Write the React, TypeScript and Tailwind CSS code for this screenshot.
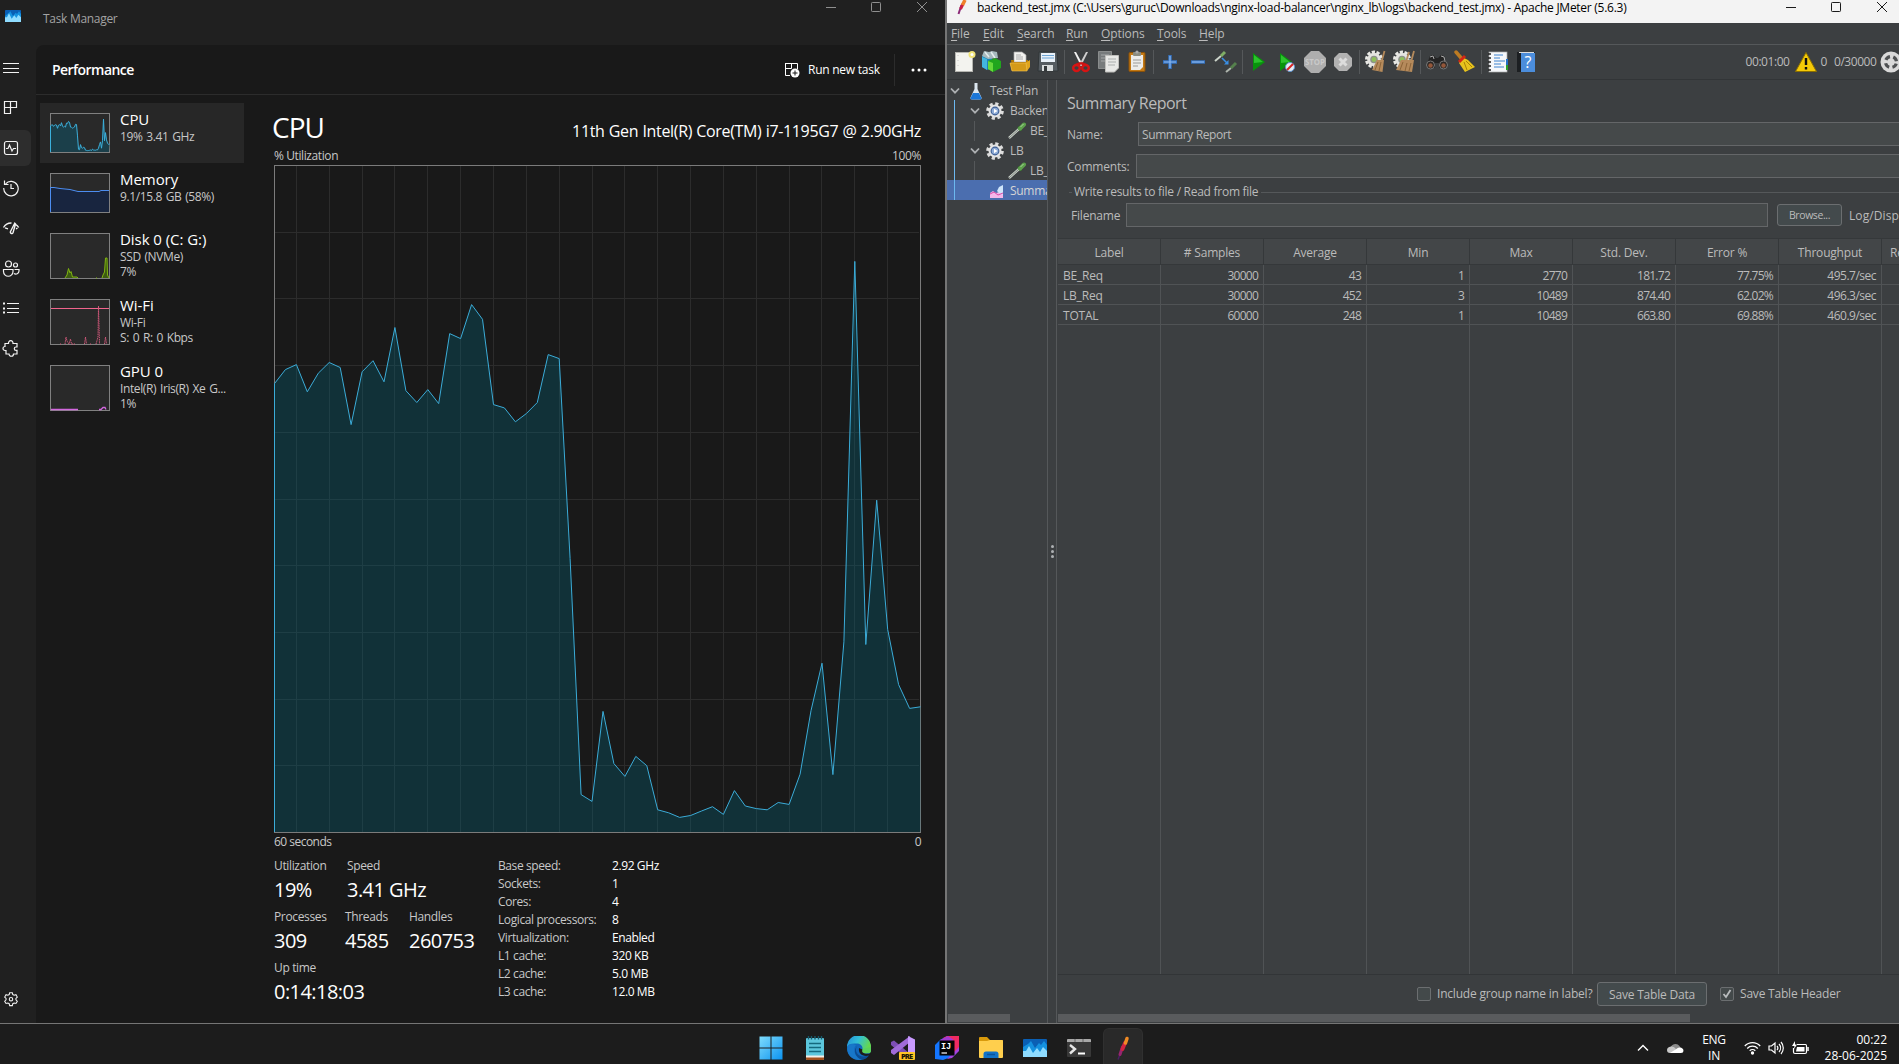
import React from "react";

const CPU = [
  383.6, 369.6, 364.6, 391.8, 373.2, 362.5, 367.5, 424.6, 371.8, 360.7, 381.8, 327.5, 390.7, 402.5, 389.6, 403.6, 333.6,
  338.6, 304.6, 319.3, 404.6, 407.9, 421.8, 413.6, 402.5, 354.6, 358.6, 558.6, 794.6, 801.4, 711.4, 763.6, 776.4, 756.4,
  765.7, 809.8, 812.8, 817.4, 815.5, 811, 806.7, 814.4, 790.6, 806, 808.6, 809.8, 802.5, 804.4, 774.2, 710.7, 663.2,
  774.6, 641.8, 261.4, 644.5, 500.2, 629.5, 684.6, 708.4, 706.8,
].map((y) => y - 165.5);

const STEP = 646 / 59;

function line(points: number[], step: number, scale: number) {
  return points.map((y, i) => `${(i * step + 0.5).toFixed(1)},${(y * scale + 0.5).toFixed(1)}`).join(" ");
}

function CpuChart() {
  const pts = line(CPU, STEP, 1);
  return (
    <svg width="647" height="668" className="block">
      {Array.from({ length: 19 }, (_, i) => {
        const x = Math.round((i * 3 + 2) * STEP) + 0.5;
        return <path key={i} d={`M${x} 0V668`} stroke="#2c2c2c" />;
      })}
      {Array.from({ length: 9 }, (_, i) => {
        const y = Math.round((i + 1) * 66.7) + 0.5;
        return <path key={i} d={`M0 ${y}H645`} stroke="#2c2c2c" />;
      })}
      <rect x="0.5" y="0.5" width="646" height="667" fill="none" stroke="#7b7b7b" />
      <polygon points={`0.5,667 ${pts} 646.5,667`} fill="#006b82" fillOpacity="0.3" />
      <polyline points={`0.5,667 ${pts}`} fill="none" stroke="#3bacd8" />
    </svg>
  );
}

function Thumb({ h, children }: { h: number; children: React.ReactNode }) {
  return (
    <svg width="60" height={h} className="block shrink-0">
      <rect x="0.5" y="0.5" width="59" height={h - 1} fill="#292929" stroke="#808080" />
      {children}
    </svg>
  );
}

const cpuMini = line(CPU, 1, 38 / 667);

const resources = [
  {
    name: "CPU",
    sub: ["19% 3.41 GHz"],
    on: true,
    art: (
      <Thumb h={40}>
        <polygon points={`1,39 ${cpuMini} 59,39`} fill="#1b3f4a" />
        <polyline points={`0.5,39 ${cpuMini}`} fill="none" stroke="#3bb0dc" />
      </Thumb>
    ),
  },
  {
    name: "Memory",
    sub: ["9.1/15.8 GB (58%)"],
    art: (
      <Thumb h={40}>
        <polygon points="1,39 1,14.5 20,16.5 28,18.5 49,18.5 51,17.5 59,17.5 59,39" fill="#18253f" />
        <path d="M0.5 39V14.5H4L10 15.5L20 16.5L28 18.5H49L51 17.5H59" fill="none" stroke="#4c8df0" />
      </Thumb>
    ),
  },
  {
    name: "Disk 0 (C: G:)",
    sub: ["SSD (NVMe)", "7%"],
    art: (
      <Thumb h={46}>
        <path
          d="M15 45L17 42L18.5 35.5L20 40L21 38.5L22.5 44L27 44L28 45M46 45H47M52 45L53 42L54.500 39L55.500 25L57 25L57.500 42L59 45"
          fill="#3d5a12"
          stroke="#7fb50f"
        />
      </Thumb>
    ),
  },
  {
    name: "Wi-Fi",
    sub: ["Wi-Fi", "S: 0 R: 0 Kbps"],
    art: (
      <Thumb h={46}>
        <path d="M1 9.500H59" stroke="#f0648c" />
        <path
          d="M10 45H11M15 45L16 38L17 42L19 45L20.500 40L21.500 45H25M34.500 45L35.500 38L36.500 45M40 45H41M46 45L48 38L48.500 7L49.500 45M54.500 45L55.500 38L56.500 45"
          fill="none"
          stroke="#d0587a"
          strokeDasharray="1.500 0.8"
        />
      </Thumb>
    ),
  },
  {
    name: "GPU 0",
    sub: ["Intel(R) Iris(R) Xe G...", "1%"],
    art: (
      <Thumb h={46}>
        <path d="M1 44.500H28M49 44.500H51L53 42.500H55L56 44.500" fill="none" stroke="#d268de" strokeWidth="1.300" />
      </Thumb>
    ),
  },
];

function NavIcon({ children, active }: { children: React.ReactNode; active?: boolean }) {
  return (
    <div className="flex h-10 items-center">
      <div className={active ? "flex h-9 w-[31px] items-center rounded-r-md bg-[#2d2d2d]" : "flex h-9 w-[31px] items-center"}>
        <svg width="18" height="18" viewBox="0 0 18 18" fill="none" stroke="#f2f2f2" strokeWidth="1.2" className="ml-[2px]">
          {children}
        </svg>
      </div>
    </div>
  );
}

const gearPath =
  "M7.500 1.500h3l.5 2 1.500.8 2-.6 1.500 2.600-1.500 1.500v1.600l1.500 1.500-1.500 2.500-2-.5-1.500.8-.5 2.100h-3l-.5-2.100-1.500-.8-2 .5L2 10.900l1.500-1.500V7.800L2 6.300l1.500-2.600 2 .6L7 3.500z";

function TaskManagerMark({ s }: { s: number }) {
  return (
    <svg width={s} height={s * 0.75} viewBox="0 0 24 18">
      <rect width="24" height="18" rx="1" fill="#0a5fb4" />
      <path d="M0 9L5 5L8 2L12 9L16 4L18 6L21 2L24 6V18H0z" fill="#1491df" />
      <path d="M0 11L3 11L6 5L10 13L14 8L17 12L20 7L24 11V18H0z" fill="#8fdcff" />
    </svg>
  );
}

function WinButtons({ color }: { color: string }) {
  return (
    <svg width="104" height="12" fill="none" stroke={color} className="block shrink-0">
      <path d="M1 6.500H11" />
      <rect x="46.500" y="1.500" width="9" height="9" rx="0.8" />
      <path d="M92 1L102 11M102 1L92 11" />
    </svg>
  );
}

function Stat({ label, value, w }: { label: string; value: string; w: string }) {
  return (
    <div className={w}>
      <div className="h-[18px] text-xs leading-[18px] tracking-[-0.35px] text-[#c8c8c8]">{label}</div>
      <div className="h-[33px] pt-px text-[20px] leading-7 tracking-[-0.55px] text-white">{value}</div>
    </div>
  );
}

const specs = [
  ["Base speed:", "2.92 GHz"],
  ["Sockets:", "1"],
  ["Cores:", "4"],
  ["Logical processors:", "8"],
  ["Virtualization:", "Enabled"],
  ["L1 cache:", "320 KB"],
  ["L2 cache:", "5.0 MB"],
  ["L3 cache:", "12.0 MB"],
];

function TaskManager() {
  return (
    <section className="flex w-[945px] shrink-0 flex-col bg-[#202020]">
      <header className="flex h-[45px] items-start">
        <div className="w-[43px] pl-[5px] pt-[10px]">
          <TaskManagerMark s={16} />
        </div>
        <div className="pt-[10px] text-xs leading-[18px] tracking-[-0.3px] text-[#a3a3a3]">Task Manager</div>
        <div className="ml-auto mr-[16px] pt-[1px]">
          <WinButtons color="#8f8f8f" />
        </div>
      </header>
      <div className="flex flex-1">
        <nav className="flex w-9 flex-col pb-1 pt-[3px]">
          <NavIcon>
            <path d="M1 4.500H17M1 9.500H17M1 13.500H17" />
          </NavIcon>
          <NavIcon>
            <path d="M2.500 2.500H14.500V8.500H2.500zM8.500 2.500V14.500H2.500V8.500" />
          </NavIcon>
          <NavIcon active>
            <rect x="2.500" y="2.500" width="13" height="13" rx="2" />
            <path d="M4 9.500H6L7.500 6L10 12L11.500 9.500H14" />
          </NavIcon>
          <NavIcon>
            <path d="M3.600 4.800A7.200 7.200 0 1 1 1.800 9M2.500 1.500V5.500H6.500M9 5V9.500H12" />
          </NavIcon>
          <NavIcon>
            <path
              d="M1.500 8.500A9 9 0 0 1 9.500 4M3 8.800L6 9.800M13.500 5.300A9 9 0 0 1 16.700 8.500M15.500 9L14 9.800M12.700 4.200L8.500 12.500a1.400 1.400 0 0 0 2.500 1.300L13.500 5z"
              strokeWidth="1.400"
            />
          </NavIcon>
          <NavIcon>
            <circle cx="6.500" cy="5" r="3" />
            <circle cx="13.500" cy="6" r="2" />
            <path d="M1.500 10.500h9.500v2a4 4 0 0 1-9.500 0zM12.500 10.500h4.500v1.500a3.200 3.200 0 0 1-5 2.500" />
          </NavIcon>
          <NavIcon>
            <path d="M5 4.500H17M5 9.500H17M5 13.500H17" />
            <path d="M1 4.500H3M1 9.500H3M1 13.500H3" strokeWidth="1.800" />
          </NavIcon>
          <NavIcon>
            <path d="M3 4.500h3.500a2.300 2.300 0 1 1 4.500 0H15v3.500h-1a1.700 1.700 0 0 0 0 3.400h1V15h-3.500a2.200 2.200 0 0 1-4.500 0H4v-3.500H3a2 2 0 0 1 0-4z" />
          </NavIcon>
          <div className="mt-auto">
            <NavIcon>
              <g transform="translate(0.9 1.400) scale(0.9)">
                <path d={gearPath} />
                <circle cx="9" cy="8.600" r="1.900" />
              </g>
            </NavIcon>
          </div>
        </nav>
        <main className="flex flex-1 flex-col rounded-tl-lg bg-[#191919]">
          <div className="flex h-[50px] items-center border-b border-[#2c2c2c] pl-4">
            <h1 className="pt-px text-sm font-semibold tracking-[-0.55px] text-white">Performance</h1>
            <div className="ml-auto flex items-center">
              <svg width="16" height="16" viewBox="0 0 16 16" fill="none" stroke="#fff">
                <path d="M1 1.500H13.500V7M1.500 1V13.500H6M7.500 1V6.500H1" />
                <circle cx="11" cy="11" r="4.500" fill="#fff" stroke="none" />
                <path d="M11 8.500V13.500M8.500 11H13.500" stroke="#191919" />
              </svg>
              <span className="ml-2 w-[72px] whitespace-nowrap text-xs font-medium tracking-[-0.25px] text-white">Run new task</span>
              <span className="ml-[14px] h-8 w-px bg-[#2c2c2c]" />
              <svg width="18" height="4" className="ml-4 mr-4" fill="#fff">
                <circle cx="2" cy="2" r="1.500" />
                <circle cx="8" cy="2" r="1.500" />
                <circle cx="14" cy="2" r="1.500" />
              </svg>
            </div>
          </div>
          <div className="flex flex-1 pt-2">
            <aside className="ml-1 w-[204px]">
              {resources.map((r) => (
                <div key={r.name} className={r.on ? "flex bg-[#272727] p-[10px]" : "flex p-[10px]"}>
                  {r.art}
                  <div className="-mt-1 ml-[10px] h-10 whitespace-nowrap">
                    <div className="text-[15px] leading-5 tracking-[-0.05px] text-white">{r.name}</div>
                    {r.sub.map((s) => (
                      <div key={s} className="text-xs leading-[15px] tracking-[-0.38px] text-[#c8c8c8] [word-spacing:1px]">
                        {s}
                      </div>
                    ))}
                  </div>
                </div>
              ))}
            </aside>
            <div className="ml-[30px] flex w-[647px] flex-col">
              <div className="flex h-[44px] items-start justify-between text-white">
                <div className="-ml-[2px] pt-[6px] text-[28px] leading-[36px] tracking-[-1px]">CPU</div>
                <div className="pt-[15px] text-[16px] leading-[26px] tracking-[-0.35px] [word-spacing:0.5px]">
                  11th Gen Intel(R) Core(TM) i7-1195G7 @ 2.90GHz
                </div>
              </div>
              <div className="flex h-[18px] justify-between text-xs leading-[18px] tracking-[-0.4px] text-[#c8c8c8]">
                <span>% Utilization</span>
                <span>100%</span>
              </div>
              <CpuChart />
              <div className="flex h-[18px] justify-between text-xs leading-[18px] tracking-[-0.52px] text-[#c8c8c8]">
                <span>60 seconds</span>
                <span>0</span>
              </div>
              <div className="mt-[6px] flex">
                <div className="w-[224px]">
                  <div className="flex">
                    <Stat label="Utilization" value="19%" w="w-[73px]" />
                    <Stat label="Speed" value="3.41 GHz" w="w-[100px]" />
                  </div>
                  <div className="flex">
                    <Stat label="Processes" value="309" w="w-[71px]" />
                    <Stat label="Threads" value="4585" w="w-[64px]" />
                    <Stat label="Handles" value="260753" w="w-[80px]" />
                  </div>
                  <Stat label="Up time" value="0:14:18:03" w="w-[120px]" />
                </div>
                <div>
                  {specs.map(([k, v]) => (
                    <div key={k} className="flex h-[18px] text-xs leading-[18px] tracking-[-0.4px]">
                      <span className="w-[114px] text-[#c8c8c8]">{k}</span>
                      <span className="text-white">{v}</span>
                    </div>
                  ))}
                </div>
              </div>
            </div>
          </div>
        </main>
      </div>
    </section>
  );
}

function Icon({ children }: { children: React.ReactNode }) {
  return (
    <div className="flex w-7 shrink-0 justify-center">
      <svg width="24" height="24" viewBox="0 0 24 24">
        {children}
      </svg>
    </div>
  );
}

function Sep() {
  return (
    <div className="flex w-[5px] shrink-0 justify-center">
      <div className="h-6 w-px bg-[#55585a]" />
    </div>
  );
}

function ClearGear() {
  return (
    <>
      <circle cx="10" cy="9.500" r="7.500" fill="none" stroke="#e8e8e4" strokeWidth="3" strokeDasharray="3.200 1.500" />
      <circle cx="10" cy="9.500" r="6.800" fill="#e4e4e0" />
      <circle cx="10" cy="9.500" r="3.800" fill="#8d918a" />
      <circle cx="10" cy="9.500" r="2.400" fill="#8fbf5a" />
    </>
  );
}

function Toolbar() {
  return (
    <div className="flex h-[35px] items-center border-b border-[#323537] pl-[3px]">
      <Icon>
        <rect x="3.500" y="2.500" width="17" height="19" fill="#f3f3ef" stroke="#b5b5b0" />
        <path d="M6 5V20" stroke="#c8c8c8" strokeDasharray="1 4" />
        <circle cx="20" cy="4.500" r="3.500" fill="#f1e478" />
        <circle cx="20" cy="4.500" r="1.500" fill="#fff" />
      </Icon>
      <Icon>
        <path d="M2 6L8 4L12 7V18L8 20L2 17z" fill="#1d84b8" />
        <path d="M2 7L7 9V20L2 17z" fill="#43b7df" />
        <path d="M2 6L4 1L9 2L12 1L17 2L18 8L8 9z" fill="#a6b9bd" />
        <path d="M5 2L9 7M11 2L15 8" stroke="#e4eced" strokeWidth="1.500" />
        <path d="M8 11L15 8L21 11V18L13 22L8 19z" fill="#21a61d" />
        <path d="M8 11L13 13V22L8 19z" fill="#67d83a" />
      </Icon>
      <Icon>
        <path d="M6 12V2H14L18 5V12H6z" fill="#f2f2ef" stroke="#aaa" strokeWidth=".7" />
        <path d="M8 5H13M8 7H15M8 9H15" stroke="#aaa" />
        <path d="M3 10H6V12H18V10L20 10V19L4 20z" fill="#b17806" />
        <path d="M2 13H17L22 10V17L19 21H4z" fill="#e0a51c" />
        <path d="M2 13H18L19 21H4z" fill="#d49a18" stroke="#f4c553" strokeWidth=".6" />
      </Icon>
      <Icon>
        <path d="M3 2H21L22 21H2z" fill="#555c61" stroke="#313638" />
        <rect x="5" y="3" width="14" height="9" fill="#e9f1f8" />
        <path d="M6 5.500H18M6 8H18" stroke="#6da5d5" />
        <rect x="6" y="15" width="11" height="6" fill="#d9dddd" />
        <rect x="8" y="16" width="3" height="5" fill="#34393b" />
      </Icon>
      <Sep />
      <Icon>
        <path d="M5 2L7 2L14 15L12 16z" fill="#f1f1f1" />
        <path d="M19 2L17 2L10 15L12 16z" fill="#cfcfcf" />
        <path d="M12 13L7 15M12 13L17 15" stroke="#c11" strokeWidth="2.500" />
        <ellipse cx="7.500" cy="18" rx="3.300" ry="3" fill="none" stroke="#d51414" strokeWidth="2.400" />
        <ellipse cx="16.500" cy="18" rx="3.300" ry="3" fill="none" stroke="#d51414" strokeWidth="2.400" />
      </Icon>
      <Icon>
        <path d="M1.500 1.500H14.500V18.500H1.500z" fill="#777b7c" stroke="#8a8d8d" />
        <path d="M4 5H12M4 8H10M4 11H8" stroke="#a5a8a8" />
        <path d="M8.500 5.500H21.500V18L17.500 22H8.500z" fill="#e7e8e6" stroke="#bfbfbc" />
        <path d="M11 9H19M11 12H19M11 15H18" stroke="#aaaead" />
      </Icon>
      <Icon>
        <rect x="4" y="2.500" width="16" height="19" rx="1" fill="#c47a15" stroke="#8a5109" />
        <path d="M6 5H18V17L15 20H6z" fill="#ececea" />
        <path d="M8 10H16M8 13H16M8 16H13" stroke="#9a9a98" />
        <rect x="8" y="2" width="8" height="4" rx="1" fill="#8b8c80" />
        <circle cx="12" cy="2" r="1.600" fill="#aaa" />
      </Icon>
      <Sep />
      <Icon>
        <path d="M12 5V19M5 12H19" stroke="#3474c6" strokeWidth="3.400" />
        <path d="M12 6V18M6 12H18" stroke="#8fb9ec" strokeWidth="1.200" />
      </Icon>
      <Icon>
        <path d="M5 12H19" stroke="#3474c6" strokeWidth="3.400" />
        <path d="M6 12H18" stroke="#8fb9ec" strokeWidth="1.200" />
      </Icon>
      <Icon>
        <path d="M1 11L7 6" stroke="#ccd4ca" strokeWidth="2" />
        <path d="M7 6L11 2" stroke="#7fae66" strokeWidth="3" />
        <path d="M8 8L13 13" stroke="#398fe5" strokeWidth="1.600" />
        <path d="M14.500 10V14.500H10z" fill="#398fe5" />
        <path d="M12 22L17 18" stroke="#aeb5ad" strokeWidth="2" />
        <path d="M17 18L22 13" stroke="#55814d" strokeWidth="3" />
      </Icon>
      <Sep />
      <Icon>
        <path d="M6 3L18 12L6 21z" fill="#08930c" />
        <path d="M7 5L16 12L7 13z" fill="#2cc22d" />
      </Icon>
      <Icon>
        <path d="M5 3L17 12L5 21z" fill="#08930c" />
        <path d="M6 5L15 12L6 13z" fill="#2cc22d" />
        <circle cx="15" cy="17" r="4.500" fill="#e3ebf3" stroke="#5c93d0" />
        <path d="M12 20L18 14" stroke="#d62222" strokeWidth="2" />
      </Icon>
      <Icon>
        <path d="M8 1H16L23 8V16L16 23H8L1 16V8z" fill="#aeaeae" />
        <text x="12" y="15.300" textAnchor="middle" fontSize="8.500" fontWeight="700" textLength="20" lengthAdjust="spacingAndGlyphs" fill="#c9c9c9">
          STOP
        </text>
      </Icon>
      <Icon>
        <path d="M8 3H16L21 8V16L16 21H8L3 16V8z" fill="#b2b2b2" />
        <path d="M8.500 8.500L15.500 15.500M15.500 8.500L8.500 15.500" stroke="#dcdcdc" strokeWidth="3" />
      </Icon>
      <Sep />
      <Icon>
        <ClearGear />
        <path d="M20.500 1L17.500 12" stroke="#b48a5c" strokeWidth="1.800" />
        <path d="M13 10H20L18.500 22L8 20z" fill="#b58a5b" />
        <path d="M14 12L11 20M17 12L15 21" stroke="#80592f" strokeWidth=".8" />
      </Icon>
      <Icon>
        <ClearGear />
        <path d="M17 2L14 12M22 1L19 12" stroke="#b48a5c" strokeWidth="1.800" />
        <path d="M9 10H22L20 22L4 20z" fill="#b58a5b" />
        <path d="M11 12L8 20M15 13L13 21M19 13L17 21" stroke="#80592f" strokeWidth=".8" />
      </Icon>
      <Sep />
      <Icon>
        <path d="M5 6L8 5L11 8H13L16 5L19 6L22 14V18H14V13H10V18H2V14z" fill="#242424" />
        <path d="M5 7L8 6L9 9M16 6L19 7L20 11" stroke="#aaa" fill="none" />
        <circle cx="5.500" cy="15" r="4" fill="#2b2725" stroke="#777" />
        <circle cx="18.500" cy="15" r="4" fill="#2b2725" stroke="#777" />
        <circle cx="5.500" cy="15.500" r="2.200" fill="#94573a" />
        <circle cx="18.500" cy="15.500" r="2.200" fill="#94573a" />
      </Icon>
      <Icon>
        <path d="M3 2L9 9" stroke="#bd7b22" strokeWidth="3.500" strokeLinecap="round" />
        <path d="M9 7L15 10L22 17L12 22L6 13z" fill="#e8c31d" />
        <path d="M11 12L14 20M13 11L19 17" stroke="#a98205" />
        <path d="M6 12L12 6" stroke="#d32614" strokeWidth="3" />
      </Icon>
      <Sep />
      <Icon>
        <rect x="3" y="2" width="18" height="20" fill="#f5f7fa" stroke="#aaa" strokeWidth=".7" />
        <path d="M8 5H17M8 8H14M8 11H19M8 14H15M8 17H18" stroke="#3c82cf" />
        <path d="M2 4H5M2 8H5M2 12H5M2 16H5M2 20H5" stroke="#222" strokeWidth="1.500" />
        <path d="M21 9V15" stroke="#2270c8" strokeWidth="2" />
        <path d="M21 15V20" stroke="#2ba02b" strokeWidth="2" />
      </Icon>
      <Icon>
        <rect x="3" y="2" width="18" height="20" fill="#1c1f22" />
        <rect x="7" y="3" width="14" height="19" fill="#4b8ddb" />
        <path d="M5 2.500H20" stroke="#ddd" />
        <text x="14" y="18" textAnchor="middle" fontSize="16" fill="#fff">
          ?
        </text>
      </Icon>
      <div className="ml-auto flex shrink-0 items-center text-xs tracking-[-0.45px]">
        <span className="w-[48px] whitespace-nowrap">00:01:00</span>
        <svg width="24" height="22" viewBox="0 0 24 22">
          <path d="M12 1.500L22.500 20.500H1.500z" fill="#f5ca07" stroke="#8c6f00" strokeLinejoin="round" />
          <path d="M12 7V14M12 16V18.500" stroke="#111" strokeWidth="2.400" />
        </svg>
        <span className="ml-[3px]">0</span>
        <span className="ml-[7px] w-[46px] whitespace-nowrap">0/30000</span>
        <svg width="19" height="22" viewBox="0 0 19 22">
          <circle cx="11" cy="11" r="10.500" fill="#d9d9d9" />
          <circle cx="11" cy="11" r="5.500" fill="none" stroke="#4e5052" strokeWidth="3.200" strokeDasharray="5.200 3.440" strokeDashoffset="-1.700" />
        </svg>
      </div>
    </div>
  );
}

function GearIcon() {
  return (
    <svg width="18" height="18" viewBox="0 0 18 18" className="block shrink-0">
      <circle cx="9" cy="9" r="7.300" fill="none" stroke="#dcdcdc" strokeWidth="3" strokeDasharray="3.200 2.530" />
      <circle cx="9" cy="9" r="6.500" fill="#e4e4e4" />
      <circle cx="9" cy="9" r="4.400" fill="#3d5e94" />
      <circle cx="9" cy="9" r="3.300" fill="#8eabd6" />
      <path d="M8 6.800L11.500 9L8 11.200z" fill="#fff" />
    </svg>
  );
}

function PipetteIcon() {
  return (
    <svg width="20" height="18" viewBox="0 0 20 18" className="block shrink-0">
      <path d="M2 16L12 7" stroke="#cfd6cf" strokeWidth="2.400" />
      <path d="M2 16L12 7" stroke="#5c615c" strokeWidth=".7" />
      <path d="M11 5L14.500 8.500" stroke="#34702a" strokeWidth="2" />
      <path d="M13 6.500L17 2.500" stroke="#5da04c" strokeWidth="4" strokeLinecap="round" />
      <path d="M13.500 5L16.500 2" stroke="#a7d69a" strokeWidth="1" />
    </svg>
  );
}

function Chevron() {
  return (
    <svg width="10" height="8" viewBox="0 0 10 8" fill="none" stroke="#adb0b2" strokeWidth="1.800" className="block shrink-0">
      <path d="M1 1.500L5 5.700L9 1.500" />
    </svg>
  );
}

function Tree() {
  const row = "flex h-5 shrink-0 items-center whitespace-nowrap";
  return (
    <div className="relative flex w-[101px] shrink-0 flex-col overflow-hidden border-r border-[#55585a] text-[12px] tracking-[-0.3px]">
      <div className={`${row} mt-px pl-[3px]`}>
        <Chevron />
        <svg width="12" height="18" viewBox="0 0 12 18" className="ml-[10px] block shrink-0">
          <path d="M4.500 1H7.500V7L11.500 15.500Q12 17.500 10 17.500H2Q0 17.500 .5 15.500L4.500 7z" fill="#dce7f0" />
          <path d="M3 11H9L11.500 16Q12 17.500 10 17.500H2Q0 17.500 .5 16z" fill="#1b77d8" />
        </svg>
        <span className="ml-[8px]">Test Plan</span>
      </div>
      <div className={`${row} gap-[6px] pl-[23px]`}>
        <Chevron />
        <GearIcon />
        <span>Backend</span>
      </div>
      <div className={`${row} pl-[27px]`}>
        <span className="mr-[32px] h-5 w-px shrink-0 bg-[#55585a]" />
        <PipetteIcon />
        <span className="ml-[3px]">BE_Req</span>
      </div>
      <div className={`${row} gap-[6px] pl-[23px]`}>
        <Chevron />
        <GearIcon />
        <span>LB</span>
      </div>
      <div className={`${row} pl-[27px]`}>
        <span className="mr-[32px] h-5 w-px shrink-0 bg-[#55585a]" />
        <PipetteIcon />
        <span className="ml-[3px]">LB_Req</span>
      </div>
      <div className={`${row} -mt-px bg-[#4b6eaf] pl-[43px] pt-px text-[#d5d5d5]`}>
        <svg width="14" height="14" viewBox="0 0 14 14" className="block shrink-0">
          <path d="M0 9L3 7L6 9L13 7V14H0z" fill="#f3b6ea" />
          <path d="M7 7L9 3L13 1V11L9 9z" fill="#cfe5fa" />
          <path d="M0 10L4 8L8 11L13 9" fill="none" stroke="#d848a8" />
        </svg>
        <span className="ml-[6px]">Summary Report</span>
      </div>
      <div className="absolute left-[7px] top-5 h-[100px] w-px bg-[#6cb8f0]" />
      <div className="mb-[1px] ml-px mt-auto h-2 w-[62px] bg-[#595b5d]" />
    </div>
  );
}

const columns = ["Label", "# Samples", "Average", "Min", "Max", "Std. Dev.", "Error %", "Throughput", "Received KB/sec"];
const rows = [
  ["BE_Req", "30000", "43", "1", "2770", "181.72", "77.75%", "495.7/sec", ""],
  ["LB_Req", "30000", "452", "3", "10489", "874.40", "62.02%", "496.3/sec", ""],
  ["TOTAL", "60000", "248", "1", "10489", "663.80", "69.88%", "460.9/sec", ""],
];

const cellAlign = (i: number) =>
  i === 0
    ? "text-left tracking-[-0.2px]"
    : i === 7
      ? "text-right tracking-[-0.5px]"
      : "text-right tracking-[-0.75px]";

function ReportTable() {
  return (
    <div className="ml-px flex h-[737px] shrink-0 flex-col overflow-hidden border-b border-[#323537]">
      <div className="flex h-[27px] shrink-0 border-y border-[#35383a] bg-[#434648]">
        {columns.map((c) => (
          <div
            key={c}
            className="w-[103px] shrink-0 overflow-hidden whitespace-nowrap border-r border-[#35383a] px-2 text-center leading-[28px] tracking-[-0.2px]"
          >
            {c}
          </div>
        ))}
      </div>
      {rows.map((r) => (
        <div key={r[0]} className="flex h-5 shrink-0">
          {r.map((c, i) => (
            <div key={i} className={`w-[103px] shrink-0 border-b border-r border-[#505355] px-[5px] leading-[21px] ${cellAlign(i)}`}>
              {c}
            </div>
          ))}
        </div>
      ))}
      <div className="flex flex-1">
        {columns.map((c) => (
          <div key={c} className="w-[103px] shrink-0 border-r border-[#505355]" />
        ))}
      </div>
    </div>
  );
}

function JMeter() {
  return (
    <section className="flex min-w-0 flex-1 flex-col overflow-hidden border-l-2 border-[#757575] bg-[#3c3f41] text-[12px] text-[#bbbbbb]">
      <header className="flex h-[23px] items-start bg-[#f3f3f3] text-black">
        <svg width="12" height="16" viewBox="0 0 12 16" className="ml-[10px]">
          <path d="M1.500 14L4.500 5" stroke="#8b2a78" strokeWidth="2" />
          <path d="M3.500 9L6 4" stroke="#c92045" strokeWidth="3" />
          <path d="M5.500 5L8 0" stroke="#f0802a" strokeWidth="3.500" />
        </svg>
        <div className="ml-[8px] whitespace-nowrap text-xs leading-4 tracking-[-0.265px]">
          backend_test.jmx (C:\Users\guruc\Downloads\nginx-load-balancer\nginx_lb\logs\backend_test.jmx) - Apache JMeter (5.6.3)
        </div>
        <div className="ml-auto mr-[10px] pt-[1px]">
          <WinButtons color="#1a1a1a" />
        </div>
      </header>
      <div className="flex h-[22px] items-center border-b border-[#55585a] pl-1 pt-px tracking-[-0.1px]">
        {[
          ["File", "w-[32px]"],
          ["Edit", "w-[34px]"],
          ["Search", "w-[49px]"],
          ["Run", "w-[35px]"],
          ["Options", "w-[56px]"],
          ["Tools", "w-[42px]"],
          ["Help", "w-[40px]"],
        ].map(([m, w]) => (
          <div key={m} className={w}>
            <span className="underline underline-offset-2">{m[0]}</span>
            {m.slice(1)}
          </div>
        ))}
      </div>
      <Toolbar />
      <div className="flex min-h-0 flex-1">
        <Tree />
        <div className="flex w-[9px] shrink-0 flex-col items-center justify-center gap-[2px] border-r border-[#55585a]">
          <span className="size-[3px] rounded-full bg-[#adb0b2]" />
          <span className="size-[3px] rounded-full bg-[#adb0b2]" />
          <span className="size-[3px] rounded-full bg-[#adb0b2]" />
        </div>
        <div className="flex min-w-0 flex-1 flex-col overflow-hidden">
          <div className="ml-[10px] flex h-[41px] items-end pb-[6px] text-base leading-6 tracking-[-0.5px]">Summary Report</div>
          <div className="ml-[10px] flex h-[25px] items-center">
            <span className="w-[71px] shrink-0 pt-[2px] tracking-[-0.2px]">Name:</span>
            <div className="h-6 flex-1 border-y border-l border-[#646668] bg-[#45494a] pl-[3px] leading-[23px] tracking-[-0.4px]">Summary Report</div>
          </div>
          <div className="ml-[10px] mt-[8px] flex h-6 items-center">
            <span className="w-[69px] shrink-0 pt-[2px] tracking-[-0.2px]">Comments:</span>
            <div className="h-6 flex-1 border-y border-l border-[#646668] bg-[#45494a]" />
          </div>
          <div className="mt-[5px] flex h-[18px] items-center pl-[12px]">
            <span className="mr-[2px] h-px w-[3px] bg-[#55585a]" />
            <span className="w-[187px] shrink-0 whitespace-nowrap tracking-[-0.27px]">Write results to file / Read from file</span>
            <span className="h-px flex-1 bg-[#55585a]" />
          </div>
          <div className="ml-[14px] mt-[2px] flex h-6 items-center whitespace-nowrap">
            <span className="w-[55px] shrink-0 pt-px tracking-[-0.2px]">Filename</span>
            <div className="h-6 w-[642px] shrink-0 border border-[#646668] bg-[#45494a]" />
            <button className="ml-[9px] h-[22px] w-[65px] shrink-0 rounded-[3px] border border-[#6b6e70] bg-[#434a4c] text-[10.5px] leading-5 tracking-[-0.4px]">Browse...</button>
            <span className="ml-[7px] shrink-0 pt-px tracking-[0.1px]">Log/Display Only:</span>
          </div>
          <div className="h-[11px] shrink-0" />
          <ReportTable />
          <div className="flex h-[38px] shrink-0 items-center pl-[360px] tracking-[-0.2px]">
            <span className="size-[14px] shrink-0 rounded-[2px] border border-[#6b6e70] bg-[#43494a]" />
            <span className="ml-[6px] w-[160px] shrink-0 whitespace-nowrap">Include group name in label?</span>
            <button className="h-6 w-[110px] shrink-0 rounded-[3px] border border-[#6b6e70] bg-[#434a4c] leading-[23px]">Save Table Data</button>
            <svg width="14" height="14" viewBox="0 0 14 14" className="ml-[13px] shrink-0">
              <rect x=".5" y=".5" width="13" height="13" rx="1.500" fill="#43494a" stroke="#6b6e70" />
              <path d="M3.500 7L6 10L10.500 3" fill="none" stroke="#b9bcbe" strokeWidth="1.800" />
            </svg>
            <span className="ml-[6px] whitespace-nowrap">Save Table Header</span>
          </div>
          <div className="mb-[1px] ml-px mt-auto h-2 w-[632px] shrink-0 bg-[#595b5d]" />
        </div>
      </div>
    </section>
  );
}

function TaskIcon({ children, active }: { children: React.ReactNode; active?: boolean }) {
  return (
    <div className="flex w-11 justify-center">
      <div className={active ? "flex h-[38px] w-10 justify-center rounded-t-md border border-b-0 border-[#303030] bg-[#292929] pt-[7px]" : "flex h-[38px] w-10 justify-center pt-2"}>
        <svg width="24" height="24" viewBox="0 0 24 24">
          {children}
        </svg>
      </div>
    </div>
  );
}

function Taskbar() {
  return (
    <footer className="flex h-[40px] shrink-0 bg-[#1c1c1c] text-white">
      <div className="ml-[749px] mt-[4px] flex h-9 overflow-hidden">
        <TaskIcon>
          <defs>
            <linearGradient id="win" x1="0" y1="0" x2="1" y2="1">
              <stop stopColor="#7fdcfc" />
              <stop offset="1" stopColor="#0c93f0" />
            </linearGradient>
          </defs>
          <path d="M.5 .5H11.500V11.500H.5zM12.500 .5H23.500V11.500H12.500zM.5 12.500H11.500V23.500H.5zM12.500 12.500H23.500V23.500H12.500z" fill="url(#win)" />
        </TaskIcon>
        <TaskIcon>
          <rect x="3" y="2" width="18" height="22" rx="1" fill="#5cc6dc" />
          <path d="M3 20H21V23Q21 24 20 24H4Q3 24 3 23z" fill="#a4501c" />
          <path d="M3 19.500H21V21.500H3z" fill="#f3efe8" />
          <path d="M6 7.500H18M6 11.500H18M6 15.500H18" stroke="#14697e" strokeWidth="1.700" />
          <path d="M5.500 0V3.500M8.500 0V3.500M12 0V3.500M15.500 0V3.500M18.500 0V3.500" stroke="#17586a" strokeWidth="1.400" />
        </TaskIcon>
        <TaskIcon>
          <defs>
            <linearGradient id="edgeTop" x1="0" y1="0" x2="1" y2=".4">
              <stop stopColor="#2389d8" />
              <stop offset=".5" stopColor="#31bfd6" />
              <stop offset="1" stopColor="#66d84c" />
            </linearGradient>
          </defs>
          <circle cx="12" cy="12" r="12" fill="#1268bd" />
          <path d="M0 11A12 12 0 0 1 24 11C24 16 20 17.500 16.500 17C14 16.500 14.500 15 15.500 13C16 9 12 7 9 7.500C4 7 1 9 0 11z" fill="url(#edgeTop)" />
          <path d="M9 9C5 13 8 22 15 23.500Q12 24.500 8 23.300C1 21 -1 14 1 9.500Q4 7 9 9z" fill="#1877c9" />
          <path d="M10 10C7 15 11 21 17 20.500Q20 20.500 22.500 18.500C21 21.500 18 23.500 15 23.500C8 22 6 14 10 10z" fill="#0b4c92" />
          <path d="M15.500 13C13 16 15 18.500 23 17L24 15.500V11Z" fill="#59d15c" />
          <path d="M15.500 13.500C14 16.500 17 18.500 23.500 17.500L22 19.500C16 21 11 18 12 12z" fill="#1c1c1c" />
        </TaskIcon>
        <TaskIcon>
          <path d="M0 6L3 4.500L18 17V24L0 9z" fill="#7d4eb5" />
          <path d="M0 17L3 19L19 6V0L0 14z" fill="#a06bd8" />
          <path d="M17 0L24 3.500V20L17 23z" fill="#c99aff" />
          <rect x="8" y="16" width="16" height="8" rx="1" fill="#ffc526" />
          <text x="16" y="22.600" fontSize="7.500" fontWeight="800" textAnchor="middle" textLength="12" fill="#241a05">
            PRE
          </text>
        </TaskIcon>
        <TaskIcon>
          <path d="M5 4L12 0L24 0V14L19 20L8 24L0 23V9z" fill="#1476ff" />
          <path d="M8 2L12 0H24V14L19 18z" fill="#ef2a62" />
          <path d="M5 4L13 0L19 4L8 8z" fill="#a33ad2" />
          <path d="M24 11V15L17 22L12 23L18 17z" fill="#a343dc" />
          <rect x="4.500" y="4.500" width="15" height="15" fill="#050505" />
          <text x="6" y="12.500" fontSize="8.500" fontWeight="700" fill="#fff" fontFamily="Liberation Mono, monospace">
            IJ
          </text>
          <path d="M6.500 17H12" stroke="#fff" strokeWidth="1.200" />
        </TaskIcon>
        <TaskIcon>
          <path d="M0 2Q0 1 1 1H8L11 4H23Q24 4 24 5V12H0z" fill="#d99a0b" />
          <path d="M0 5H8L11 4H23Q24 4 24 5V21Q24 22 23 22H1Q0 22 0 21z" fill="#ffcf4d" />
          <path d="M4.500 22V18Q4.500 15.500 7 15.500H17Q19.500 15.500 19.500 18V22z" fill="#1172c7" />
          <path d="M8 18.500H16" stroke="#0a549c" strokeWidth="1.500" />
        </TaskIcon>
        <TaskIcon>
          <g transform="translate(0 3)">
            <rect width="24" height="18" rx="1" fill="#0a5fb4" />
            <path d="M0 8L5 5L8 2L12 9L16 4L18 6L21 2L24 6V18H0z" fill="#1491df" />
            <path d="M0 12L3 12L6 7L10 14L14 9L17 13L20 8L24 12V18H0z" fill="#8fdcff" />
          </g>
        </TaskIcon>
        <TaskIcon>
          <rect x="0" y="3" width="24" height="18" rx="1" fill="#383838" />
          <path d="M0 6V4Q0 3 1 3H23Q24 3 24 4V6z" fill="#a8a8a8" />
          <path d="M8 3V6M16 3V6" stroke="#666" />
          <path d="M3 9L8 13L3 17.500" stroke="#e6e6e6" strokeWidth="2.400" fill="none" />
          <path d="M11 17.500H18" stroke="#fff" strokeWidth="2" />
        </TaskIcon>
        <TaskIcon active>
          <path d="M7 23.500L10 16" stroke="#4b1f66" strokeWidth="1.400" />
          <path d="M9 18.500L11.500 11" stroke="#97246f" strokeWidth="3" strokeLinecap="round" />
          <path d="M11.500 13L14 7" stroke="#d42440" strokeWidth="3.800" strokeLinecap="round" />
          <path d="M14.500 7L16 2.500" stroke="#f08a24" strokeWidth="3.500" strokeLinecap="round" />
        </TaskIcon>
      </div>
      <div className="ml-auto mr-[12px] flex items-center pt-[8px] text-xs">
        <svg width="12" height="8" fill="none" stroke="#fff" strokeWidth="1.400">
          <path d="M1 6.500L6 1.500L11 6.500" />
        </svg>
        <svg width="17" height="12" viewBox="0 0 17 12" className="ml-[18px]">
          <path d="M3.500 7A5 5 0 0 1 12.500 4L15 8H2z" fill="#8b8b8b" />
          <path d="M0 8Q0 5 4 4.500Q7 4 9 7L6 11H3Q0 11 0 8z" fill="#c8c8c8" />
          <path d="M3 11L10 6.500Q13 4.500 16 7Q17.500 11 14 11z" fill="#fff" />
        </svg>
        <div className="ml-[15px] w-[30px] text-center leading-4 tracking-[-0.3px]">
          <div>ENG</div>
          <div>IN</div>
        </div>
        <svg width="17" height="14" viewBox="0 0 17 14" fill="none" stroke="#fff" strokeWidth="1.300" className="ml-[15px]">
          <path d="M.8 5A10.500 10.500 0 0 1 16.200 5M3.200 7.500A7.300 7.300 0 0 1 13.800 7.500M5.700 9.800A4 4 0 0 1 11.300 9.800" />
          <circle cx="8.500" cy="12" r="1" fill="#fff" />
        </svg>
        <svg width="17" height="14" viewBox="0 0 17 14" fill="none" stroke="#fff" strokeWidth="1.200" className="ml-[7px]">
          <path d="M1 5H3.500L7 2V12L3.500 9H1zM9 5A3 3 0 0 1 9 9M11 3A6 6 0 0 1 11 11M13 1A9 9 0 0 1 13 13" />
        </svg>
        <svg width="17" height="14" viewBox="0 0 17 14" className="ml-[7px]">
          <path d="M5 3.500H13.500Q14.500 3.500 14.500 5V11Q14.500 12.500 13 12.500H3Q1.500 12.500 1.500 11V7" fill="none" stroke="#fff" strokeWidth="1.200" />
          <path d="M5 6H12.500V10.500H4z" fill="#fff" />
          <path d="M3 0L0 5H2.500L2 8L5 3.500H3z" fill="#fff" />
          <path d="M16 6V10" stroke="#fff" strokeWidth="1.500" />
        </svg>
        <div className="w-[78px] whitespace-nowrap text-right leading-4 tracking-[-0.02px]">
          <div>00:22</div>
          <div>28-06-2025</div>
        </div>
      </div>
    </footer>
  );
}

export default function App() {
  return (
    <div className="flex h-[1064px] w-[1899px] flex-col overflow-hidden bg-[#1c1c1c] font-['Open_Sans',sans-serif]">
      <div className="flex h-[1024px] shrink-0 border-b border-[#757575]">
        <TaskManager />
        <JMeter />
      </div>
      <Taskbar />
    </div>
  );
}
